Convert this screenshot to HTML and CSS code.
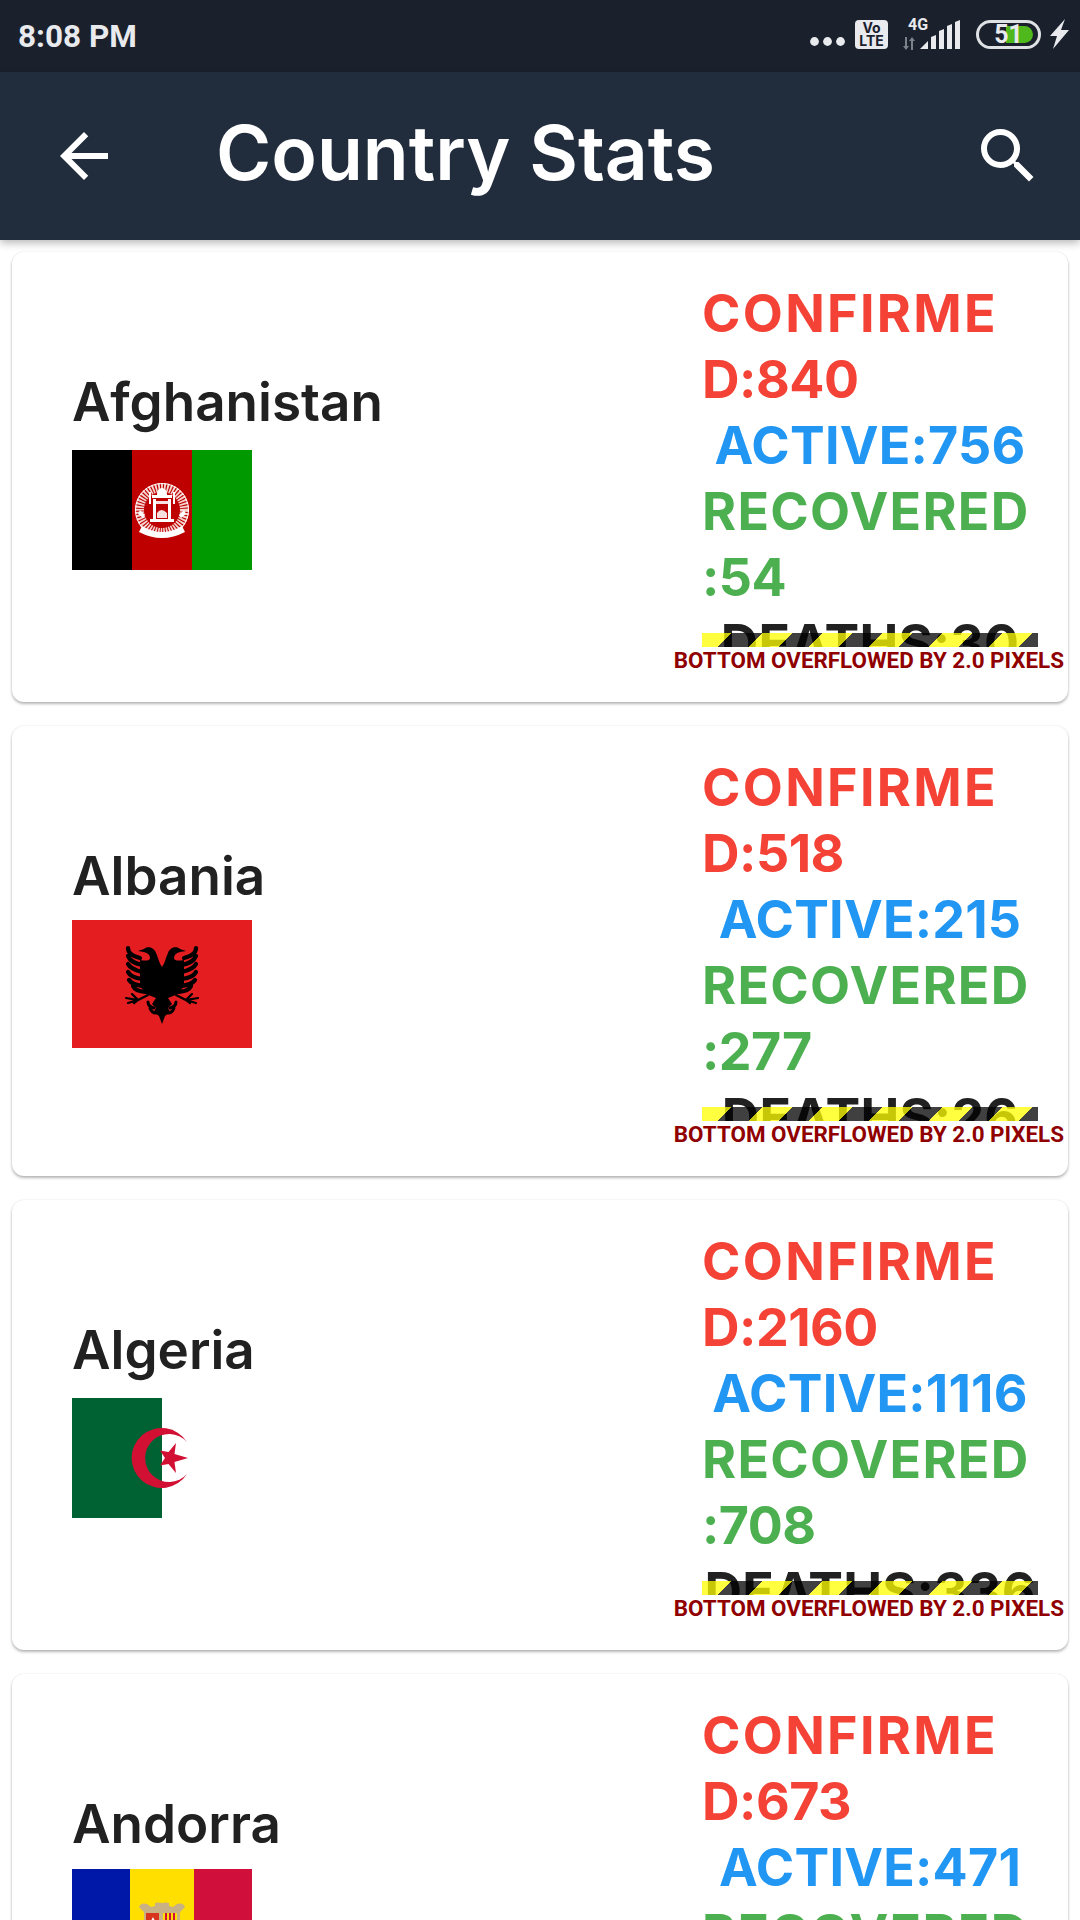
FILE: index.html
```html
<!DOCTYPE html>
<html lang="en">
<head>
<meta charset="utf-8">
<title>Country Stats</title>
<link rel="stylesheet" href="styles.css">
</head>
<body>
<div class="screen">
  <header class="status">
    <span class="time">8:08 PM</span>
    <div class="status-icons">
      <svg class="dots" width="35" height="9" viewBox="0 0 35 9"><circle cx="4.5" cy="4.5" r="4.4"/><circle cx="17.5" cy="4.5" r="4.4"/><circle cx="30.5" cy="4.5" r="4.4"/></svg>
      <div class="volte"><span>Vo</span><span>LTE</span></div>
      <div class="network">
        <span class="four-g">4G</span>
        <svg class="arrows" width="14" height="13" viewBox="0 0 14 13"><path d="M3 0h2v9h2l-3 4-3-4h2zM9 13h2V4h2L10 0 7 4h2z"/></svg>
        <svg class="bars" width="41" height="29" viewBox="0 0 41 29"><path d="M0 29 8 21v8zM11 17l5-2v14h-5zM19 11l5-2v20h-5zM27 6l5-2v25h-5zM35 2l5-2v29h-5z"/></svg>
      </div>
      <div class="battery"><span class="battery-fill"></span><span class="battery-num">51</span></div>
      <svg class="bolt" width="19" height="30" viewBox="0 0 19 30"><path d="M15 0 0 17h7L3 30 19 11h-8z"/></svg>
    </div>
  </header>

  <div class="appbar">
    <svg class="icon" viewBox="0 0 24 24"><path d="M20 11H7.83l5.59-5.59L12 4l-8 8 8 8 1.41-1.41L7.83 13H20v-2z"/></svg>
    <h1 class="title">Country Stats</h1>
    <svg class="icon" viewBox="0 0 24 24"><path d="M15.5 14h-.79l-.28-.27A6.47 6.47 0 0 0 16 9.5 6.5 6.5 0 1 0 9.5 16c1.61 0 3.09-.59 4.23-1.57l.27.28v.79l5 4.99L20.49 19l-4.99-5zm-6 0C7.01 14 5 11.99 5 9.5S7.01 5 9.500 5 14 7.010 14 9.500 11.990 14 9.500 14z"/></svg>
  </div>

  <main class="list">
    <article class="card">
      <div class="country">
        <div class="name">Afghanistan</div>
        <div class="flag-box">
          <svg class="flag" width="180" height="120" viewBox="0 0 180 120">
            <rect width="60" height="120" fill="#000"/>
            <rect x="60" width="60" height="120" fill="#be0000"/>
            <rect x="120" width="60" height="120" fill="#009900"/>
            <circle cx="90" cy="60" r="22.500" fill="none" stroke="#f5d4d0" stroke-width="9" stroke-dasharray="1.800 1.100"/>
            <circle cx="90" cy="60" r="26.500" fill="none" stroke="#fff" stroke-width="1"/>
            <path d="M70 76q20 12 40 0l3 6q-23 12-46 0z" fill="#fff"/>
            <path d="M80 47h20v24H80z" fill="#be0000"/>
            <path d="M80 45h20v3H80zM78 69h24v3H78zM81 49h3v20h-3zM96 49h3v20h-3zM85 44a5 6 0 0 1 10 0v1H85zM77 42h2v12h-2zM101 42h2v12h-2z" fill="#fff"/>
            <path d="M84 51h12v3H84zM85 68v-5q4-6 10 0v5z" fill="#f8e0e0"/>
            <path d="M68 60l5 5-2 3-5-4zM112 60l-5 5 2 3 5-4z" fill="#fff"/>
          </svg>
        </div>
      </div>
      <div class="stats">
        <div class="stats-clip">
          <div class="red"><span class="caps-wide">CONFIRME</span><br>D:840</div>
          <div class="blue center">ACTIVE:756</div>
          <div class="green"><span class="caps">RECOVERED</span><br>:54</div>
          <div class="dark center">DEATHS:30</div>
        </div>
        <div class="hazard"></div>
        <div class="overflow-msg">BOTTOM OVERFLOWED BY 2.0 PIXELS</div>
      </div>
    </article>

    <article class="card">
      <div class="country">
        <div class="name">Albania</div>
        <div class="flag-box">
          <svg class="flag" width="180" height="128" viewBox="0 0 180 128">
            <defs>
              <g id="eagle-half" fill="#000" stroke="#000" stroke-linecap="round">
                <path stroke="none" d="M90 47C87 43 86 37 84 33C82 27 75 26 72 29L66 31L72 32C76 33 78 35 78 38C78 41 73 41 68 40V66L74 74L84 78L80 84L84 88L82 92L87 96L90 104Z"/>
                <path fill="none" stroke-width="4.200" d="M56 28C56 33 60 36 68 38M56 36C58 41 62 43 70 45M56 44C58 48 62 50 70 52M56 52C58 56 62 58 70 59M57 60C59 63 63 65 71 66M61 66C63 70 66 71 73 72"/>
                <path fill="none" stroke-width="3" d="M76 82C76 85 78 87 82 88M78 88C79 91 81 93 84 93"/>
                <path fill="none" stroke-width="2.200" d="M54 78L66 80L76 75M60 74L66 80L62 83M56 83L66 80"/>
              </g>
            </defs>
            <rect width="180" height="128" fill="#e41e20"/>
            <use href="#eagle-half"/>
            <use href="#eagle-half" transform="matrix(-1 0 0 1 180 0)"/>
          </svg>
        </div>
      </div>
      <div class="stats">
        <div class="stats-clip">
          <div class="red"><span class="caps-wide">CONFIRME</span><br>D:518</div>
          <div class="blue center">ACTIVE:215</div>
          <div class="green"><span class="caps">RECOVERED</span><br>:277</div>
          <div class="dark center">DEATHS:26</div>
        </div>
        <div class="hazard"></div>
        <div class="overflow-msg">BOTTOM OVERFLOWED BY 2.0 PIXELS</div>
      </div>
    </article>

    <article class="card">
      <div class="country">
        <div class="name">Algeria</div>
        <div class="flag-box">
          <svg class="flag" width="180" height="120" viewBox="0 0 180 120">
            <rect width="90" height="120" fill="#006233"/>
            <path fill-rule="evenodd" fill="#d21034" d="M115 44A30 30 0 1 0 115 76 24 24 0 1 1 115 44Z"/>
            <path fill="#d21034" d="M116 60 102.500 64 104 75 96.500 66 88 67.500 93 60 88 52.500 96.500 54 104 45 102.500 56z"/>
          </svg>
        </div>
      </div>
      <div class="stats">
        <div class="stats-clip">
          <div class="red"><span class="caps-wide">CONFIRME</span><br>D:2160</div>
          <div class="blue center">ACTIVE:1116</div>
          <div class="green"><span class="caps">RECOVERED</span><br>:708</div>
          <div class="dark center">DEATHS:336</div>
        </div>
        <div class="hazard"></div>
        <div class="overflow-msg">BOTTOM OVERFLOWED BY 2.0 PIXELS</div>
      </div>
    </article>

    <article class="card">
      <div class="country">
        <div class="name">Andorra</div>
        <div class="flag-box">
          <svg class="flag" width="180" height="126" viewBox="0 0 180 126">
            <rect width="58" height="126" fill="#0018a8"/>
            <rect x="58" width="64" height="126" fill="#fedf00"/>
            <rect x="122" width="58" height="126" fill="#d0103a"/>
            <path fill="#c8b185" d="M67 38q2-5 8-3l4 3 4-1v-3q3-1 7 0 4-1 7 0v3l4 1 4-3q6-2 8 3l-5 5v40H72V43z"/>
            <rect x="74" y="44" width="13" height="30" fill="#d8331d"/>
            <path d="M77 56l4-8 4 8z" fill="#fff"/>
            <rect x="91" y="44" width="14" height="30" fill="#fedf00"/>
            <path d="M93 44h2v30h-2zM97 44h2v30h-2zM101 44h2v30h-2z" fill="#d0103a"/>
          </svg>
        </div>
      </div>
      <div class="stats">
        <div class="stats-clip">
          <div class="red"><span class="caps-wide">CONFIRME</span><br>D:673</div>
          <div class="blue center">ACTIVE:471</div>
          <div class="green"><span class="caps">RECOVERED</span><br>:158</div>
        </div>
      </div>
    </article>
  </main>
</div>
</body>
</html>
```
FILE: styles.css
```css
* { box-sizing: border-box; }
html, body { margin: 0; padding: 0; }
body { background: #fff; }
.screen {
  width: 1080px;
  height: 1920px;
  overflow: hidden;
  display: flex;
  flex-direction: column;
  font-family: Inter, "Liberation Sans", sans-serif;
}

/* status bar */
.status {
  height: 72px;
  flex: none;
  background: #1a212d;
  display: flex;
  align-items: center;
  justify-content: space-between;
  padding: 0 11px 0 18px;
  color: #e8eaed;
}
.time { font: 700 31.500px Roboto, sans-serif; }
.status-icons { display: flex; align-items: flex-start; height: 36px; }
.dots { fill: #e8eaed; margin: 19px 10px 0 0; }
.volte {
  width: 33px;
  height: 29px;
  margin: 2px 14px 0 0;
  background: #e8eaed;
  border-radius: 4px;
  color: #1a212d;
  display: flex;
  flex-direction: column;
  align-items: center;
  font: 700 14px/13px Inter, sans-serif;
  padding-top: 1px;
}
.network { width: 58px; height: 36px; position: relative; margin-right: 16px; }
.four-g { position: absolute; left: 6px; top: -2px; font: 700 16px/18px Roboto, sans-serif; }
.arrows { position: absolute; left: 0; top: 19px; fill: #7d828a; }
.bars { position: absolute; left: 18px; top: 2px; fill: #e8eaed; }
.battery {
  width: 65px;
  height: 29px;
  margin: 2px 9px 0 0;
  border: 3px solid #dfe1e4;
  border-radius: 15px;
  position: relative;
}
.battery-fill {
  position: absolute;
  left: 27px;
  top: 3px;
  width: 27px;
  height: 17px;
  background: #4fb81c;
  border-radius: 0 9px 9px 0;
}
.battery-num {
  position: absolute;
  left: 0;
  right: 0;
  top: -3px;
  text-align: center;
  font: 700 25px/29px Roboto, sans-serif;
  color: #e8eaed;
}
.bolt { fill: #e8eaed; margin-top: 1px; }

/* app bar */
.appbar {
  height: 168px;
  flex: none;
  background: #212c3c;
  display: flex;
  align-items: center;
  padding: 0 36px 0 48px;
  box-shadow: 0 3px 8px rgba(0, 0, 0, .28);
  position: relative;
}
.icon { width: 72px; height: 72px; fill: #fff; flex: none; }
.title {
  flex: 1;
  margin: 0 0 6px 96px;
  font: 600 75px/84px Inter, sans-serif;
  color: #fff;
}

/* list */
.list {
  display: flex;
  flex-direction: column;
  gap: 24px;
  padding: 12px 12px 0;
}
.card {
  height: 450px;
  flex: none;
  background: #fff;
  border-radius: 12px;
  box-shadow: 0 2px 3px rgba(0, 0, 0, .28), 0 0 2px rgba(0, 0, 0, .1);
  display: flex;
  align-items: stretch;
  position: relative;
}
.country {
  width: 690px;
  flex: none;
  padding-left: 60px;
  display: flex;
  flex-direction: column;
  justify-content: center;
}
.name { height: 66px; font: 600 53px/44px Inter, sans-serif; color: #212121; }
.flag-box { height: 128px; display: flex; align-items: center; }
.flag { display: block; }

.stats { width: 336px; flex: none; padding-top: 29px; }
.stats-clip {
  height: 366px;
  overflow: hidden;
  font: 700 52px/66px Inter, sans-serif;
  letter-spacing: -.5px;
  white-space: nowrap;
}
.caps-wide { letter-spacing: 2.300px; }
.caps { letter-spacing: 1.300px; }
.center { text-align: center; letter-spacing: .2px; }
.red { color: #f44336; }
.blue { color: #2196f3; }
.green { color: #4caf50; }
.dark { color: #212121; }

.hazard {
  position: absolute;
  left: 690px;
  top: 381px;
  width: 336px;
  height: 14px;
  background: repeating-linear-gradient(135deg,
    rgba(255, 255, 0, .75) 0, rgba(255, 255, 0, .75) 21.21px,
    rgba(0, 0, 0, .75) 21.21px, rgba(0, 0, 0, .75) 42.43px);
}
.overflow-msg {
  position: absolute;
  right: 4px;
  top: 396px;
  font: 700 22.400px/24px Roboto, sans-serif;
  color: #900000;
  white-space: nowrap;
  text-shadow: 0 0 2px #fff;
}
```
